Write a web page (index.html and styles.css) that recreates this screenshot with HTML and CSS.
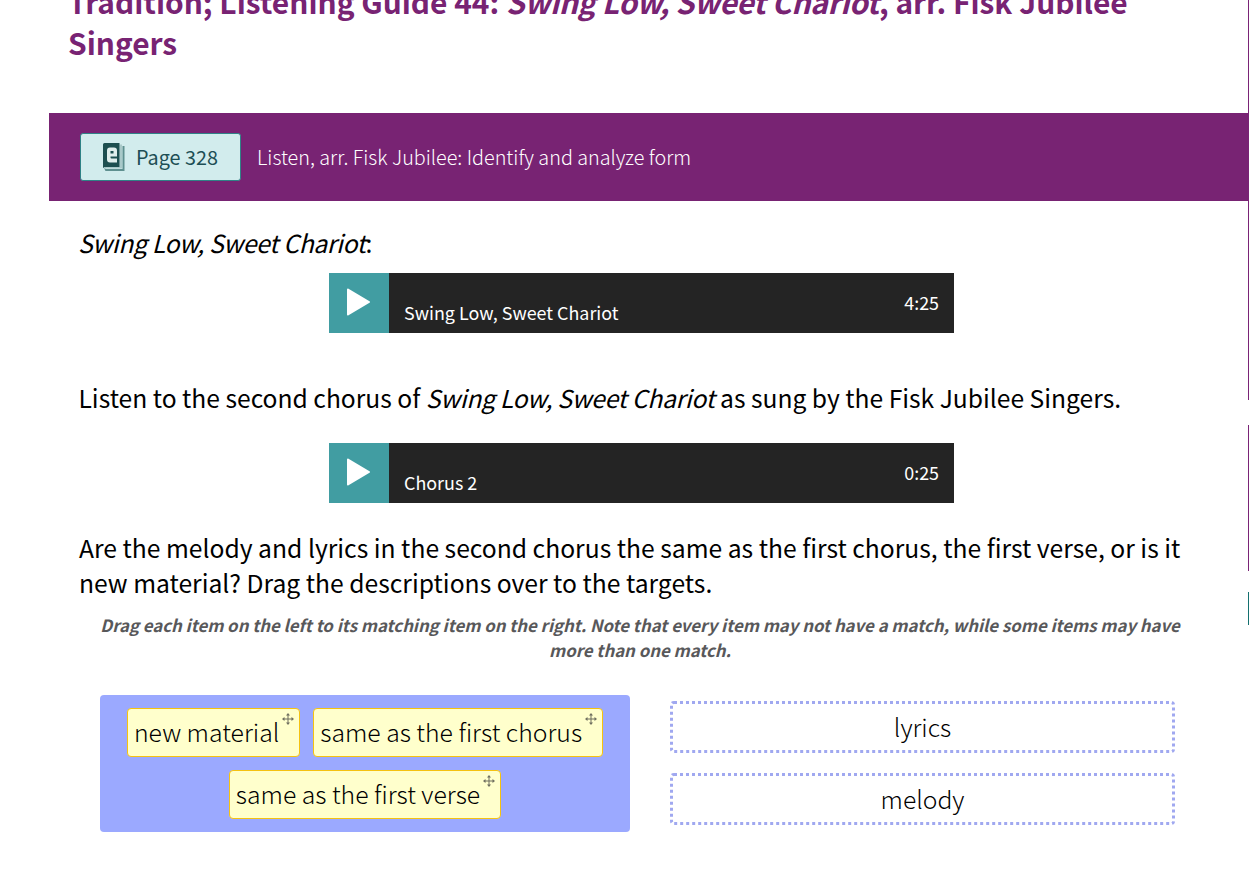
FILE: index.html
```html
<!DOCTYPE html>
<html lang="en">
<head>
<meta charset="utf-8">
<title>Listening Guide 44</title>
<link rel="stylesheet" href="styles.css">
</head>
<body>
<div class="rail">
  <span class="rail-seg seg-a"></span>
  <span class="rail-seg seg-b"></span>
  <span class="rail-seg seg-c"></span>
</div>
<main class="page">
  <h1 class="title">Tradition; Listening Guide 44: <em>Swing Low, Sweet Chariot</em>, arr. Fisk Jubilee Singers</h1>
  <div class="banner">
    <a class="page-btn">
      <svg class="ebook" viewBox="0 0 22 29" width="22" height="29" aria-hidden="true">
        <path d="M1 25 2.500 28H21.500V3h-2v23H3z" fill="#5f9090"/>
        <path d="M16.500 1.500h2.500V25.500H2V24h14.500z" fill="#a9c9c9"/>
        <path d="M1.500 0H16.500V24H3q-2 0-3 1V1.500Q0 0 1.500 0z" fill="#1d4f50"/>
        <path d="M4 7.500q0-3 3-3h4q3 0 3 3V13.500H7.500v1q0 1 1 1H14v4H7q-3 0-3-3zM7.500 8v2.500H10.500V8z" fill="#e0eeec" fill-rule="evenodd"/>
      </svg>
      <span>Page 328</span>
    </a>
    <span class="banner-text">Listen, arr. Fisk Jubilee: Identify and analyze form</span>
  </div>
  <div class="content">
    <p class="lead"><em>Swing Low, Sweet Chariot</em>:</p>
    <div class="player player-first">
      <div class="play"><svg viewBox="0 0 26 30" width="26" height="30" aria-hidden="true"><path d="M2 2.500 23 15 2 27.500z" fill="#fff" stroke="#fff" stroke-width="2" stroke-linejoin="round"/></svg></div>
      <div class="track"><span class="track-name">Swing Low, Sweet Chariot</span><span class="track-time">4:25</span></div>
    </div>
    <p class="body-a">Listen to the second chorus of <em>Swing Low, Sweet Chariot</em> as sung by the Fisk Jubilee Singers.</p>
    <div class="player player-second">
      <div class="play"><svg viewBox="0 0 26 30" width="26" height="30" aria-hidden="true"><path d="M2 2.500 23 15 2 27.500z" fill="#fff" stroke="#fff" stroke-width="2" stroke-linejoin="round"/></svg></div>
      <div class="track"><span class="track-name">Chorus 2</span><span class="track-time">0:25</span></div>
    </div>
    <p class="body-b">Are the melody and lyrics in the second chorus the same as the first chorus, the first verse, or is it new material? Drag the descriptions over to the targets.</p>
    <p class="hint">Drag each item on the left to its matching item on the right. Note that every item may not have a match, while some items may have more than one match.</p>
    <div class="dnd">
      <div class="source">
        <div class="chip">new material<svg class="move" viewBox="0 0 12 12" width="12" height="12" aria-hidden="true"><path d="M6 0 8 2.500H6.500V5.500H9.500V4L12 6 9.500 8V6.500H6.500V9.500H8L6 12 4 9.500H5.500V6.500H2.500V8L0 6 2.500 4V5.500H5.500V2.500H4z" fill="#6e6e5e"/></svg></div>
        <div class="chip">same as the first chorus<svg class="move" viewBox="0 0 12 12" width="12" height="12" aria-hidden="true"><path d="M6 0 8 2.500H6.500V5.500H9.500V4L12 6 9.500 8V6.500H6.500V9.500H8L6 12 4 9.500H5.500V6.500H2.500V8L0 6 2.500 4V5.500H5.500V2.500H4z" fill="#6e6e5e"/></svg></div>
        <div class="chip">same as the first verse<svg class="move" viewBox="0 0 12 12" width="12" height="12" aria-hidden="true"><path d="M6 0 8 2.500H6.500V5.500H9.500V4L12 6 9.500 8V6.500H6.500V9.500H8L6 12 4 9.500H5.500V6.500H2.500V8L0 6 2.500 4V5.500H5.500V2.500H4z" fill="#6e6e5e"/></svg></div>
      </div>
      <div class="targets">
        <div class="target">lyrics</div>
        <div class="target">melody</div>
      </div>
    </div>
  </div>
</main>
</body>
</html>
```
FILE: styles.css
```css
html, body {
  margin: 0;
  padding: 0;
  height: 880px;
  overflow: hidden;
  background: #fff;
}
body {
  font-family: "Noto Sans CJK SC", "Noto Sans CJK JP", "Noto Sans", sans-serif;
  color: #000;
  position: relative;
}
p { margin: 0; }
em { letter-spacing: -0.27px; }
.rail {
  position: absolute;
  top: 0;
  right: 0;
  width: 1px;
  height: 880px;
}
.rail-seg {
  position: absolute;
  left: 0;
  width: 1px;
  background: #7a2376;
}
.seg-a { top: 0; height: 400px; }
.seg-b { top: 425px; height: 146px; }
.seg-c { top: 592px; height: 33px; background: #14706f; }
.page {
  margin-left: 49px;
  width: 1199px;
}
.title {
  margin: -19px 0 0;
  padding: 0 100px 0 19px;
  font-size: 29.900px;
  line-height: 41px;
  font-weight: 700;
  color: #782373;
}
.banner {
  margin-top: 50px;
  height: 88px;
  background: #782373;
  display: flex;
  align-items: center;
  padding-left: 31px;
}
.page-btn {
  box-sizing: border-box;
  width: 161px;
  height: 48px;
  background: #d2eced;
  border: 1px solid #2f8286;
  border-radius: 3px;
  display: flex;
  align-items: center;
  padding-left: 22px;
  gap: 11px;
  font-size: 19.800px;
  line-height: 28px;
  color: #1d4f55;
}
.ebook { display: block; }
.banner-text {
  margin-left: 16px;
  font-size: 19.800px;
  line-height: 28px;
  font-weight: 300;
  color: #fff;
}
.content {
  padding-left: 30px;
  width: 1102px;
}
.lead {
  margin: 24px 0 0 -1px;
  font-size: 24.700px;
  line-height: 35px;
}
.lead em { letter-spacing: -0.35px; }
.player {
  width: 625px;
  height: 60px;
  margin-left: 250px;
  display: flex;
  background: #242424;
}
.player-first { margin-top: 13px; }
.player-second { margin-top: 28px; }
.play {
  width: 60px;
  height: 60px;
  background: #419da2;
  display: flex;
  justify-content: center;
  padding-top: 14px;
  box-sizing: border-box;
}
.play svg { display: block; }
.track {
  flex: 1;
  position: relative;
  color: #fff;
  font-size: 17.900px;
  line-height: 24px;
}
.track-name {
  position: absolute;
  left: 15px;
  bottom: 9px;
}
.track-time {
  position: absolute;
  right: 15px;
  top: 17px;
}
.body-a {
  margin: 47px 0 0 -0.5px;
  font-size: 24.640px;
  line-height: 35px;
}
.body-b {
  margin-top: 27px;
  font-size: 24.680px;
  line-height: 35px;
}
.hint {
  margin: 13px 0 0 20px;
  font-size: 16.800px;
  line-height: 25px;
  font-weight: 700;
  font-style: italic;
  color: #58585a;
  text-align: center;
}
.dnd {
  margin: 32px 0 0 21px;
  display: flex;
  align-items: flex-start;
  gap: 40px;
}
.source {
  box-sizing: border-box;
  width: 530px;
  height: 137px;
  background: #9ba9ff;
  border-radius: 4px;
  display: flex;
  flex-wrap: wrap;
  justify-content: center;
  align-content: flex-start;
  gap: 13px 13px;
  padding-top: 13px;
}
.chip {
  box-sizing: border-box;
  position: relative;
  height: 49px;
  padding: 0 20px 0 6px;
  background: #ffffcc;
  border: 1px solid #f5c211;
  border-radius: 4px;
  font-size: 24.750px;
  line-height: 45px;
  font-weight: 300;
  white-space: nowrap;
}
.move {
  position: absolute;
  top: 4px;
  right: 5px;
}
.targets {
  padding-top: 6px;
  display: flex;
  flex-direction: column;
  gap: 20px;
}
.target {
  box-sizing: border-box;
  width: 505px;
  height: 52px;
  border: 3px dotted #a0a8f0;
  border-radius: 4px;
  font-size: 24.700px;
  line-height: 44px;
  font-weight: 300;
  text-align: center;
}
```
